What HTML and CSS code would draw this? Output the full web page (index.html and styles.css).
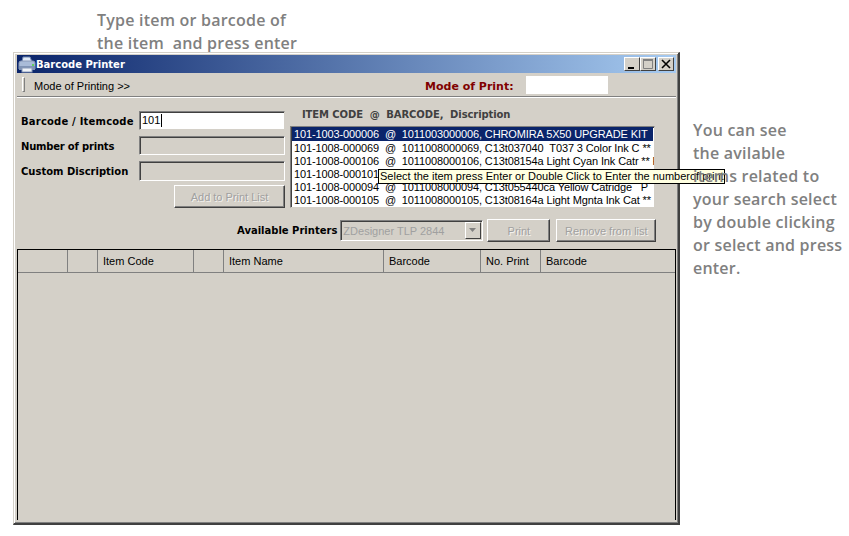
FILE: index.html
```html
<!DOCTYPE html>
<html>
<head>
<meta charset="utf-8">
<title>Barcode Printer</title>
<link rel="stylesheet" href="styles.css">
</head>
<body>
<div class="top-note">Type item or barcode of<br>the item&nbsp; and press enter</div>
<div class="stage">
  <div class="window">
    <div class="titlebar">
      <svg class="app-icon" width="18" height="17" viewBox="0 0 18 17">
        <path d="M5 1h7l2 5H4z" fill="#dfe8f5" stroke="#6f86b0"/>
        <path d="M1 7q0-2 2-2h12q2 0 2 2v6H1z" fill="#a9bbd8" stroke="#8a9ab8"/>
        <rect x="1" y="10" width="16" height="4" fill="#7f93b5"/>
        <rect x="4" y="12" width="10" height="4" fill="#eef2f8" stroke="#8a9ab8"/>
        <rect x="14" y="8" width="2" height="2" fill="#5fd05f"/>
      </svg>
      <span class="title-text">Barcode Printer</span>
      <div class="controls">
        <div class="ctl"><svg width="14" height="12" viewBox="0 0 14 12"><rect x="3" y="9" width="6" height="2" fill="#000"/></svg></div>
        <div class="ctl ctl-max"><svg width="14" height="12" viewBox="0 0 14 12"><path d="M2.5 1.5h9v9h-9z" fill="none" stroke="#808080"/><path d="M2 2h10" stroke="#808080" stroke-width="2"/></svg></div>
        <div class="ctl ctl-close"><svg width="14" height="12" viewBox="0 0 14 12"><path d="M3 2l8 8M11 2l-8 8" stroke="#000" stroke-width="1.6" fill="none"/></svg></div>
      </div>
    </div>
    <div class="menubar">
      <div class="grip"></div>
      <span class="menu-item">Mode of Printing &gt;&gt;</span>
      <span class="mode-label">Mode of Print:</span>
      <div class="mode-value"></div>
    </div>
    <div class="form">
      <div class="fields">
        <div class="field-row"><label class="label wide">Barcode / Itemcode</label><div class="input active">101<i class="caret"></i></div></div>
        <div class="field-row"><label class="label narrow">Number of prints</label><div class="input"></div></div>
        <div class="field-row tall"><label class="label">Custom Discription</label><div class="input"></div></div>
        <div class="add-row"><div class="btn btn-add">Add to Print List</div></div>
      </div>
      <div class="results">
        <div class="results-head">ITEM CODE&nbsp; @&nbsp; BARCODE,&nbsp; Discription</div>
        <div class="listbox">
          <div class="li selected">101-1003-000006&nbsp; @&nbsp; 1011003000006, CHROMIRA 5X50 UPGRADE KIT</div>
          <div class="li">101-1008-000069&nbsp; @&nbsp; 1011008000069, C13t037040&nbsp; T037 3 Color Ink C **</div>
          <div class="li">101-1008-000106&nbsp; @&nbsp; 1011008000106, C13t08154a Light Cyan Ink Catr ** P</div>
          <div class="li">101-1008-000101&nbsp; @&nbsp; 1011008000101, C13t08134a Magenta Ink Cat</div>
          <div class="li">101-1008-000094&nbsp; @&nbsp; 1011008000094, C13t055440ca Yellow Catridge&nbsp; &nbsp;P</div>
          <div class="li">101-1008-000105&nbsp; @&nbsp; 1011008000105, C13t08164a Light Mgnta Ink Cat **</div>
        </div>
      </div>
    </div>
    <div class="printers">
      <span class="label">Available Printers</span>
      <div class="combo"><span class="combo-text">ZDesigner TLP 2844</span><div class="combo-btn"><svg width="8" height="5" viewBox="0 0 8 5"><path d="M0 0h7L3.5 4z" fill="#808080"/></svg></div></div>
      <div class="btn btn-print">Print</div>
      <div class="btn btn-remove">Remove from list</div>
    </div>
    <div class="grid">
      <div class="grid-head">
        <div class="th w50"></div>
        <div class="th w30"></div>
        <div class="th w96">Item Code</div>
        <div class="th w30"></div>
        <div class="th w160">Item Name</div>
        <div class="th w97">Barcode</div>
        <div class="th w60">No. Print</div>
        <div class="th last">Barcode</div>
      </div>
    </div>
    <div class="tooltip">Select the item press Enter or Double Click to Enter the numberof prints</div>
  </div>
  <div class="side-note">You can see<br>the avilable<br>items related to<br>your search select<br>by double clicking<br>or select and press<br>enter.</div>
</div>
</body>
</html>
```
FILE: styles.css
```css
* { box-sizing: border-box; }
html, body { margin: 0; padding: 0; background: #fff; }
body { width: 849px; height: 536px; overflow: hidden; font-family: "Liberation Sans", Arial, sans-serif; font-size: 11px; color: #000; }

.top-note, .side-note {
  font-family: "Open Sans", sans-serif;
  font-weight: 600;
  font-size: 16px;
  line-height: 23px;
  color: #808080;
  letter-spacing: 0.22px;
  white-space: nowrap;
}
.top-note { height: 52px; padding: 9px 0 0 97px; }

.stage { display: flex; padding-left: 13px; align-items: flex-start; }
.side-note { position: relative; z-index: 2; margin: 67px 0 0 13px; }

.window {
  position: relative;
  width: 667px;
  height: 473px;
  display: flex;
  flex-direction: column;
  padding: 2px 2px 3px 3px;
  background: #d4d0c8;
  border-top: 1px solid #d4d0c8;
  border-left: 1px solid #d4d0c8;
  border-right: 2px solid #404040;
  border-bottom: 2px solid #404040;
  box-shadow: inset 1px 1px 0 #fff, inset -1px -1px 0 #808080;
}

.titlebar {
  flex: none;
  height: 18px;
  display: flex;
  align-items: center;
  background: linear-gradient(to right, #0a246a, #a6caf0);
  padding-left: 1px;
}
.app-icon { flex: none; }
.title-text { color: #fff; font-family: "DejaVu Sans", sans-serif; font-weight: bold; font-size: 10px; }
.controls { margin-left: auto; display: flex; padding-right: 2px; }
.ctl {
  width: 16px; height: 14px; background: #d4d0c8;
  border: 1px solid; border-color: #fff #404040 #404040 #fff;
  display: flex; align-items: center; justify-content: center;
}
.ctl svg { flex: none; }
.ctl-close { margin-left: 2px; }

.menubar { flex: none; height: 24px; display: flex; align-items: center; border-bottom: 1px solid #808080; box-shadow: 0 1px 0 #fff; }
.grip { width: 3px; height: 15px; margin-left: 5px; border: 1px solid; border-color: #fff #808080 #808080 #fff; }
.menu-item { margin-left: 9px; padding-top: 2px; font-size: 11px; }
.mode-label { margin-left: 295px; padding-top: 3px; color: #800000; font-family: "DejaVu Sans", sans-serif; font-weight: bold; font-size: 11px; }
.mode-value { width: 82px; height: 18px; margin-left: 12px; background: #fff; }

.form { flex: none; display: flex; height: 112px; }
.fields { width: 264px; margin-left: 4px; padding-top: 14px; }
.field-row { display: flex; align-items: center; justify-content: space-between; height: 19px; margin-bottom: 6px; }
.field-row.tall { height: 20px; margin-bottom: 4px; }
.label { font-family: "DejaVu Sans", sans-serif; font-weight: bold; font-size: 10px; color: #000; white-space: nowrap; }
.label.wide { padding-top: 2px; letter-spacing: 0.2px; }
.label.narrow { padding-top: 2px; letter-spacing: -0.2px; }
.input { width: 146px; height: 100%; border: 1px solid; border-color: #808080 #fff #fff #808080; box-shadow: inset 1px 1px 0 #404040; padding: 2px 0 0 2px; }
.input.active { background: #fff; border-color: #808080 #d4d0c8 #d4d0c8 #808080; line-height: 13px; }
.caret { display: inline-block; width: 1px; height: 13px; background: #000; vertical-align: top; margin-left: 1px; }
.add-row { display: flex; justify-content: flex-end; }

.btn {
  height: 23px; display: flex; align-items: center; justify-content: center;
  color: #a0a0a0; background: #d4d0c8; font-size: 11px; text-shadow: 1px 1px 0 #f4f2ee;
  border: 1px solid; border-color: #fff #404040 #404040 #fff;
  box-shadow: inset -1px -1px 0 #808080;
}
.btn-add { width: 111px; }
.btn-print { width: 63px; margin-left: 4px; }
.btn-remove { width: 100px; margin-left: 6px; }

.results { margin-left: 5px; width: 365px; }
.results-head { height: 29px; padding: 12px 0 0 12px; font-family: "DejaVu Sans", sans-serif; font-weight: bold; font-size: 10px; color: #404040; white-space: nowrap; letter-spacing: -0.1px; }
.listbox { height: 82px; padding: 0 1px; background: #fff; border: 1px solid; border-color: #808080 #d4d0c8 #d4d0c8 #808080; box-shadow: inset 1px 1px 0 #404040; overflow: hidden; }
.li { height: 13px; line-height: 15px; padding-left: 2px; white-space: nowrap; font-size: 11px; letter-spacing: -0.12px; }
.li.selected { height: 14px; background: #0a246a; color: #fff; }

.printers { flex: none; display: flex; align-items: center; height: 23px; margin-top: 10px; padding-left: 220px; }
.combo { width: 143px; height: 21px; margin-left: 3px; display: flex; align-items: center; border: 1px solid; border-color: #808080 #fff #fff #808080; box-shadow: inset 1px 1px 0 #404040; }
.combo-text { flex: 1; padding-left: 2px; font-size: 11px; color: #a0a0a0; white-space: nowrap; }
.combo-btn { flex: none; width: 16px; height: 17px; margin-right: 1px; display: flex; align-items: center; justify-content: center; border: 1px solid; border-color: #fff #404040 #404040 #fff; }

.grid { flex: 1; margin-top: 7px; border-top: 1px solid #000; border-left: 1px solid #000; border-right: 1px solid #000; min-height: 0; }
.grid-head { display: flex; height: 23px; border-bottom: 1px solid #808080; }
.th { flex: none; height: 22px; line-height: 22px; padding-left: 5px; border-right: 1px solid #808080; white-space: nowrap; font-size: 11px; }
.w50 { width: 50px; }
.w30 { width: 30px; }
.w96 { width: 96px; }
.w160 { width: 160px; }
.w97 { width: 97px; }
.w60 { width: 60px; }
.last { border-right: 0; flex: 1; }

.tooltip {
  position: absolute;
  left: 364px; top: 116px;
  width: 347px; height: 15px;
  line-height: 13px;
  padding-left: 1px;
  background: #ffffe1;
  border: 1px solid #000;
  white-space: nowrap;
  font-size: 11px;
  overflow: hidden;
}
```
